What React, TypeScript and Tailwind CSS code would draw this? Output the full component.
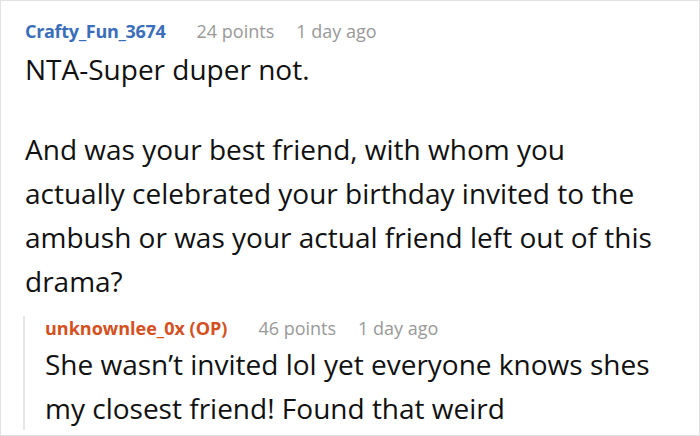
export default function App() {
  return (
    <div className="w-[700px] h-[436px] overflow-hidden border border-[#e2e2e2] bg-white font-['Open_Sans',sans-serif]">
      <div className="pl-6 pr-[28px] pt-[18px]">
        <div className="flex items-center text-[18px] leading-6">
          <span className="font-bold text-[#3a6ebb] tracking-[-0.3px]">Crafty_Fun_3674</span>
          <span className="ml-[31px] text-[#999]">24 points</span>
          <span className="ml-[22px] text-[#999]">1 day ago</span>
        </div>
        <div className="mt-1 text-[28px] leading-[44px] text-[#111]">
          <p>NTA-Super duper not.</p>
          <p className="mt-[36px] pr-4">
            And was your best friend, with whom you actually celebrated your birthday invited to the ambush or was your actual friend left out of this drama?
          </p>
        </div>
        <div className="mt-[13px] border-l-2 border-[#e6e6e6] pl-5 ml-[-2px]">
          <div className="flex items-center text-[18px] leading-6">
            <span className="font-bold text-[#d4501f]">unknownlee_0x (OP)</span>
            <span className="ml-[31px] text-[#999]">46 points</span>
            <span className="ml-[22px] text-[#999]">1 day ago</span>
          </div>
          <div className="mt-0.5 text-[28px] leading-[44px] text-[#111]">
            <p>She wasn’t invited lol yet everyone knows shes my closest friend! Found that weird</p>
          </div>
        </div>
      </div>
    </div>
  );
}
